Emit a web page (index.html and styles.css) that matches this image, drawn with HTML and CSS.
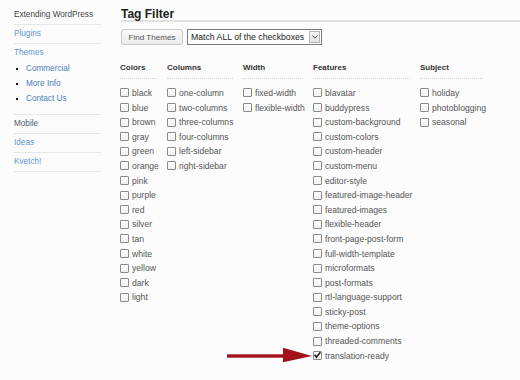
FILE: index.html
```html
<!DOCTYPE html>
<html>
<head>
<meta charset="utf-8">
<title>Tag Filter</title>
<link rel="stylesheet" href="styles.css">
</head>
<body>
<div class="page">
  <nav class="side">
    <div class="side-item dark">Extending WordPress</div>
    <div class="side-item link">Plugins</div>
    <div class="side-item themes">
      <div class="link">Themes</div>
      <ul class="sub">
        <li>Commercial</li>
        <li>More Info</li>
        <li>Contact Us</li>
      </ul>
    </div>
    <div class="side-item muted">Mobile</div>
    <div class="side-item link">Ideas</div>
    <div class="side-item link">Kvetch!</div>
  </nav>
  <main class="main">
    <h1 class="title">Tag Filter</h1>
    <div class="controls">
      <button class="btn">Find Themes</button>
      <div class="select">
        <span class="select-text">Match ALL of the checkboxes</span>
        <span class="select-arrow"><svg width="6" height="4" viewBox="0 0 6 4"><path d="M0.5 0.5 L3 3.2 L5.5 0.5" fill="none" stroke="#444" stroke-width="1"/></svg></span>
      </div>
    </div>
    <div class="filters">
      <section class="col">
        <h2>Colors</h2>
        <ul class="opts">
          <li><span class="cb"></span>black</li>
          <li><span class="cb"></span>blue</li>
          <li><span class="cb"></span>brown</li>
          <li><span class="cb"></span>gray</li>
          <li><span class="cb"></span>green</li>
          <li><span class="cb"></span>orange</li>
          <li><span class="cb"></span>pink</li>
          <li><span class="cb"></span>purple</li>
          <li><span class="cb"></span>red</li>
          <li><span class="cb"></span>silver</li>
          <li><span class="cb"></span>tan</li>
          <li><span class="cb"></span>white</li>
          <li><span class="cb"></span>yellow</li>
          <li><span class="cb"></span>dark</li>
          <li><span class="cb"></span>light</li>
        </ul>
      </section>
      <section class="col">
        <h2>Columns</h2>
        <ul class="opts">
          <li><span class="cb"></span>one-column</li>
          <li><span class="cb"></span>two-columns</li>
          <li><span class="cb"></span>three-columns</li>
          <li><span class="cb"></span>four-columns</li>
          <li><span class="cb"></span>left-sidebar</li>
          <li><span class="cb"></span>right-sidebar</li>
        </ul>
      </section>
      <section class="col">
        <h2>Width</h2>
        <ul class="opts">
          <li><span class="cb"></span>fixed-width</li>
          <li><span class="cb"></span>flexible-width</li>
        </ul>
      </section>
      <section class="col">
        <h2>Features</h2>
        <ul class="opts">
          <li><span class="cb"></span>blavatar</li>
          <li><span class="cb"></span>buddypress</li>
          <li><span class="cb"></span>custom-background</li>
          <li><span class="cb"></span>custom-colors</li>
          <li><span class="cb"></span>custom-header</li>
          <li><span class="cb"></span>custom-menu</li>
          <li><span class="cb"></span>editor-style</li>
          <li><span class="cb"></span>featured-image-header</li>
          <li><span class="cb"></span>featured-images</li>
          <li><span class="cb"></span>flexible-header</li>
          <li><span class="cb"></span>front-page-post-form</li>
          <li><span class="cb"></span>full-width-template</li>
          <li><span class="cb"></span>microformats</li>
          <li><span class="cb"></span>post-formats</li>
          <li><span class="cb"></span>rtl-language-support</li>
          <li><span class="cb"></span>sticky-post</li>
          <li><span class="cb"></span>theme-options</li>
          <li><span class="cb"></span>threaded-comments</li>
          <li><span class="cb checked"><svg width="9" height="9" viewBox="0 0 9 9"><path d="M1.6 3.8 L3.4 6.2 L7.4 1.2" fill="none" stroke="#1a1a1a" stroke-width="1.5"/></svg></span>translation-ready</li>
        </ul>
      </section>
      <section class="col">
        <h2>Subject</h2>
        <ul class="opts">
          <li><span class="cb"></span>holiday</li>
          <li><span class="cb"></span>photoblogging</li>
          <li><span class="cb"></span>seasonal</li>
        </ul>
      </section>
    </div>
  </main>
</div>
<svg class="arrow" width="88" height="18" viewBox="0 0 88 18">
  <rect x="1" y="8.3" width="58" height="3.4" fill="#a3121a"/>
  <polygon points="57,1.7 86,10 57,16.3" fill="#a3121a"/>
</svg>
</body>
</html>
```
FILE: styles.css
```css
body {
  margin: 0;
  background: #fcfcfc;
  font-family: "Liberation Sans", Arial, sans-serif;
}

.page {
  display: flex;
  align-items: flex-start;
}

.side {
  margin-left: 14px;
  width: 87px;
  padding-top: 6px;
  font-size: 8.2px;
}

.side-item {
  line-height: 18px;
  border-bottom: 1px solid #e6e6e6;
  white-space: nowrap;
}

.dark { color: #444; }
.link { color: #5c97cf; }
.muted { color: #4d5b70; }

.themes {
  line-height: 17px;
  padding-bottom: 8px;
}

.sub {
  list-style: none;
  margin: 0;
  padding: 0 0 0 2px;
}

.sub li {
  display: flex;
  align-items: center;
  gap: 8px;
  line-height: 15px;
  color: #4a7fb6;
}

.sub li::before {
  content: "";
  width: 2px;
  height: 2px;
  background: #111;
}

.main {
  flex: 1;
  margin-left: 20px;
  padding-top: 8px;
}

.title {
  margin: 0;
  font-size: 12px;
  line-height: 12px;
  font-weight: bold;
  color: #222;
  border-bottom: 2px solid #e4e0e0;
}

.controls {
  display: flex;
  gap: 4px;
  margin-top: 7px;
  height: 16px;
}

.btn {
  width: 62px;
  height: 16px;
  padding: 0;
  font-family: "Liberation Sans", Arial, sans-serif;
  font-size: 8.1px;
  color: #555;
  background: linear-gradient(#fbfbfb, #ebebeb);
  border: 1px solid #c9c9c9;
  border-radius: 3px;
}

.select {
  display: flex;
  align-items: center;
  box-sizing: border-box;
  width: 135px;
  height: 16px;
  border: 1px solid #7a7a7a;
  background: #fff;
  font-size: 8.7px;
  color: #222;
  padding-left: 3px;
}

.select-text {
  flex: 1;
  white-space: nowrap;
}

.select-arrow {
  display: flex;
  align-items: center;
  justify-content: center;
  box-sizing: border-box;
  width: 11px;
  height: 12px;
  margin-right: 1px;
  border: 1px solid #b5b5b5;
  background: linear-gradient(#f8f8f8, #e2e2e2);
}

.filters {
  display: grid;
  grid-template-columns: 37px 66px 60px 97px 63px;
  column-gap: 10px;
  align-items: start;
  margin-top: 17px;
  margin-left: -1px;
}

.col h2 {
  margin: 0;
  font-size: 8px;
  line-height: 12px;
  font-weight: bold;
  color: #333;
  padding-bottom: 4px;
  border-bottom: 1px dotted #d3d3d3;
}

.opts {
  list-style: none;
  margin: 6.7px 0 0;
  padding: 0;
}

.opts li {
  display: flex;
  align-items: center;
  height: 14.6px;
  font-size: 8.6px;
  color: #555;
  white-space: nowrap;
}

.cb {
  flex: none;
  box-sizing: border-box;
  width: 9px;
  height: 9px;
  margin-right: 3px;
  border: 1px solid #8b8b8b;
  border-radius: 1px;
  background: linear-gradient(#fff, #f1f1f1);
  position: relative;
}

.cb.checked svg {
  position: absolute;
  left: -1px;
  top: -1px;
}

.arrow {
  position: absolute;
  left: 226px;
  top: 346px;
}
```
